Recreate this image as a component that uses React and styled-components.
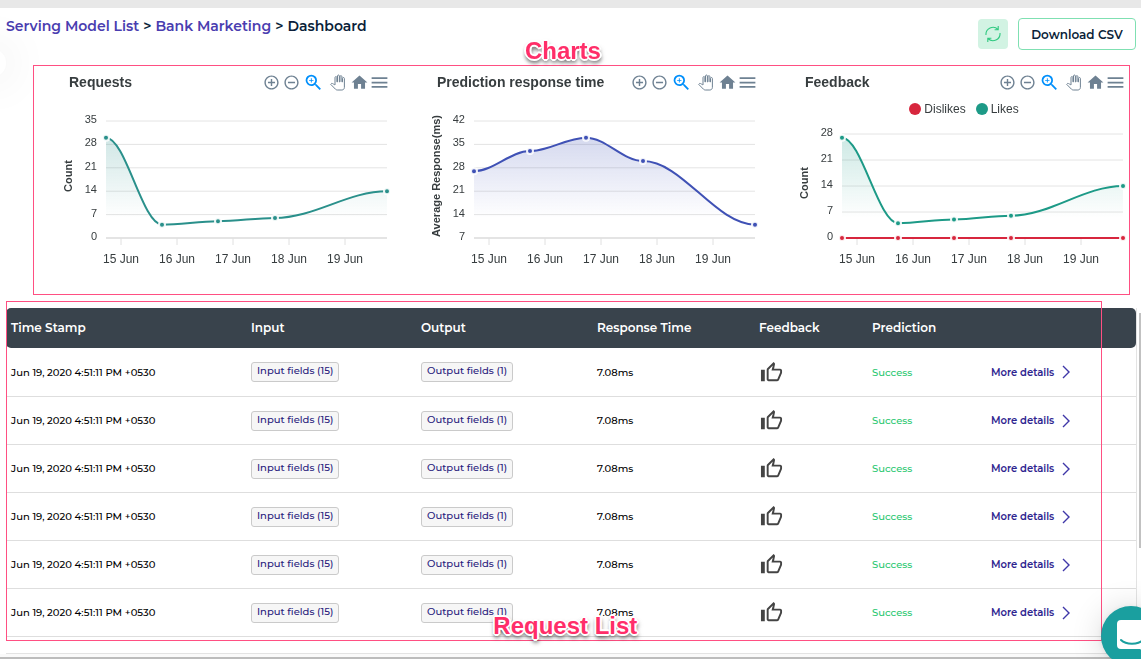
import React from "react";
import styled, { createGlobalStyle } from "styled-components";
import {
  MdAddCircleOutline,
  MdRemoveCircleOutline,
  MdZoomIn,
  MdHome,
  MdMenu,
} from "react-icons/md";

const uiFont = `Montserrat, Inter, "Liberation Sans", sans-serif`;
const chartFont = `"Liberation Sans", Helvetica, Arial, sans-serif`;

const GlobalStyle = createGlobalStyle`
  * { box-sizing: border-box; }
  body {
    margin: 0;
    background: #fff;
    color: #0b2239;
    font-family: ${uiFont};
    overflow: hidden;
  }
  button { font-family: inherit; cursor: pointer; }
`;

const Page = styled.div`
  display: flex;
  flex-direction: column;
`;

const TopStrip = styled.div`
  height: 8px;
  background: #e8e8e8;
`;

const Header = styled.header`
  display: flex;
  justify-content: space-between;
  align-items: flex-start;
  height: 57px;
  padding: 10px 5px 0 6px;
`;

const Breadcrumb = styled.nav`
  display: flex;
  gap: 4px;
  font-size: 14px;
  line-height: 16px;
  font-weight: 600;
  color: #0b1f3a;
  a {
    color: #4a3db0;
    text-decoration: none;
  }
`;

const Actions = styled.div`
  display: flex;
  align-items: center;
  gap: 10px;
`;

const RefreshButton = styled.button`
  display: flex;
  align-items: center;
  justify-content: center;
  width: 30px;
  height: 30px;
  padding: 0;
  border: 0;
  border-radius: 4px;
  background: #d2f3e3;
  color: #2fc980;
`;

const DownloadButton = styled.button`
  height: 32px;
  width: 118px;
  padding: 0;
  border: 1px solid #7fe0b2;
  border-radius: 4px;
  background: #fff;
  color: #0b1f3a;
  font-size: 12px;
  font-weight: 600;
  white-space: nowrap;
`;

const ChartsSection = styled.section`
  position: relative;
  display: grid;
  grid-template-columns: repeat(3, 1fr);
  height: 230px;
  margin: 0 4px 0 33px;
`;

const ChartCard = styled.article`
  display: flex;
  flex-direction: column;
  min-width: 0;
  font-family: ${chartFont};
  color: #373d3f;
`;

const ChartHead = styled.div`
  display: flex;
  align-items: center;
  justify-content: space-between;
  height: 34px;
  padding: 0 13px 0 36px;
`;

const ChartTitle = styled.h2`
  margin: 0;
  font-size: 14px;
  line-height: 16px;
  font-weight: 700;
  white-space: nowrap;
`;

const Toolbar = styled.div`
  display: flex;
  align-items: center;
  gap: 2px;
`;

const ToolButton = styled.button`
  display: flex;
  align-items: center;
  justify-content: center;
  width: ${(p) => (p.$wide ? 22 : 18)}px;
  height: 20px;
  padding: 0;
  border: 0;
  background: none;
  color: ${(p) => (p.$active ? "#008ffb" : "#6e8192")};
  svg { flex: none; overflow: visible; }
`;

const ChartBody = styled.div`
  position: relative;
`;

const Plot = styled.svg`
  display: block;
  width: 100%;
  height: 180px;
  font-family: ${chartFont};
  fill: #373d3f;
`;

const Legend = styled.div`
  position: absolute;
  top: 1px;
  right: 14px;
  left: 36px;
  display: flex;
  justify-content: center;
  gap: 10px;
  font-size: 12px;
  line-height: 18px;
`;

const LegendItem = styled.span`
  display: flex;
  align-items: center;
  gap: 3px;
  &::before {
    content: "";
    width: 12px;
    height: 12px;
    border-radius: 50%;
    background: ${(p) => p.$color};
  }
`;

const Frame = styled.div`
  position: absolute;
  top: ${(p) => p.$top}px;
  right: ${(p) => p.$right}px;
  bottom: ${(p) => p.$bottom}px;
  left: 0;
  border: 1px solid #ff4f82;
  pointer-events: none;
`;

const Callout = styled.div`
  position: absolute;
  left: ${(p) => p.$left};
  ${(p) => (p.$edge === "top" ? "top: -28px;" : "bottom: 13px;")}
  font: 700 24px/28px ${chartFont};
  color: #ff2e69;
  white-space: nowrap;
  transform: translateX(-50%);
  pointer-events: none;
  text-shadow: -2px 0 #fff, 2px 0 #fff, 0 -2px #fff, 0 2px #fff,
    -1px -1px #fff, 1px 1px #fff, -1px 1px #fff, 1px -1px #fff,
    0 3px 4px rgba(0, 0, 0, 0.6), 1px 3px 5px rgba(0, 0, 0, 0.5);
`;

const ListSection = styled.section`
  position: relative;
  margin: 13px 4px 0 6px;
  padding-bottom: 16px;
  border-right: 1px solid #e3e3e3;
  border-bottom: 1px solid #e3e3e3;
`;

const RequestTable = styled.table`
  width: 100%;
  table-layout: fixed;
  border-collapse: separate;
  border-spacing: 0;
`;

const Col = styled.col`
  width: ${(p) => (p.$w ? `${p.$w}px` : "auto")};
`;

const Th = styled.th`
  height: 40px;
  padding: 0 5px 2px;
  background: #39434c;
  color: #fff;
  font-size: 12px;
  font-weight: 600;
  text-align: left;
  &:first-child { border-radius: 5px 0 0 5px; }
  &:last-child { border-radius: 0 5px 5px 0; }
`;

const Td = styled.td`
  height: 48px;
  padding: 0 5px;
  border-bottom: 1px solid #dedede;
  font-size: 10px;
  font-weight: 500;
  color: ${(p) => (p.$success ? "#28c76f" : "#000")};
  white-space: nowrap;
  vertical-align: middle;
  svg { display: block; }
  tr:first-child > & { height: 49px; }
`;

const ThumbIcon = styled.svg`
  margin-left: 1px;
  fill: #444;
`;

const FieldButton = styled.button`
  display: block;
  height: 20px;
  padding: 0 5px 2px;
  border: 1px solid #cacaca;
  border-radius: 3px;
  background: #f6f6f6;
  color: #28207c;
  font-size: 10px;
  line-height: 16px;
  font-weight: 500;
`;

const DetailsLink = styled.a`
  display: flex;
  align-items: center;
  gap: 8px;
  color: #2e2590;
  font-size: 10px;
  font-weight: 600;
  text-decoration: none;
`;

const BottomBar = styled.div`
  height: 5px;
  border-bottom: 2px solid #bcbcbc;
  background: #fafafa;
`;

const ScrollThumb = styled.div`
  position: absolute;
  top: 5px;
  right: -5px;
  width: 2px;
  height: 235px;
  background: #c1c1c1;
`;

const DrawerHandle = styled.button`
  position: fixed;
  top: 49px;
  left: -22px;
  width: 28px;
  height: 28px;
  padding: 0;
  border: 0;
  border-radius: 50%;
  background: #fff;
  box-shadow: 0 0 48px rgba(0, 0, 0, 0.14);
`;

const ChatButton = styled.button`
  position: fixed;
  right: -20px;
  bottom: -7px;
  width: 60px;
  height: 60px;
  padding: 0;
  border: 0;
  border-radius: 50%;
  background: #1a9f9f;
  box-shadow: 0 1px 6px rgba(0, 0, 0, 0.08), 0 2px 32px rgba(0, 0, 0, 0.16);
  svg { display: block; }
`;

const X = [73, 129, 185, 242, 354];
const TICKS = [88, 144, 200, 256, 312];
const DAYS = ["15 Jun", "16 Jun", "17 Jun", "18 Jun", "19 Jun"];
const BASE = 139;

function smoothPath(points) {
  return points.reduce((d, [x, y], i) => {
    if (i === 0) return `M${x} ${y}`;
    const [px, py] = points[i - 1];
    const reach = (x - px) * 0.35;
    return `${d} C${px + reach} ${py} ${x - reach} ${y} ${x} ${y}`;
  }, "");
}

function AreaChart({ id, title, axis, axisY, top, min, max, series, legend }) {
  const toY = (v) => BASE - ((v - min) / (max - min)) * (BASE - top);
  const labels = [];
  for (let v = min; v <= max; v += 7) labels.push(v);
  return (
    <ChartCard>
      <ChartHead>
        <ChartTitle>{title}</ChartTitle>
        <Toolbar>
          <ToolButton aria-label="Zoom in"><MdAddCircleOutline size={17} /></ToolButton>
          <ToolButton aria-label="Zoom out"><MdRemoveCircleOutline size={17} /></ToolButton>
          <ToolButton aria-label="Selection zoom" $active $wide><MdZoomIn size={21} /></ToolButton>
          <ToolButton aria-label="Pan" $wide>
            <svg width="15" height="15" viewBox="0 0 24 24" fill="none" stroke="currentColor" strokeWidth="1.6">
              <path d="M23 5.5V20c0 2.2-1.8 4-4 4h-7.3c-1.08 0-2.1-.43-2.85-1.19L1 14.83s1.26-1.23 1.3-1.25c.22-.19.49-.29.79-.29.22 0 .42.06.6.16.04.01 4.31 2.46 4.31 2.46V4c0-.83.67-1.5 1.5-1.5S11 3.17 11 4v7h1V1.5c0-.83.67-1.5 1.5-1.5S15 .67 15 1.5V11h1V2.5c0-.83.67-1.5 1.5-1.5s1.5.67 1.5 1.5V11h1V5.5c0-.83.67-1.5 1.5-1.5s1.5.67 1.5 1.5z" />
            </svg>
          </ToolButton>
          <ToolButton aria-label="Reset"><MdHome size={19} /></ToolButton>
          <ToolButton aria-label="Menu"><MdMenu size={21} /></ToolButton>
        </Toolbar>
      </ChartHead>
      <ChartBody>
        {legend && (
          <Legend>
            {legend.map((l) => (
              <LegendItem key={l.name} $color={l.color}>{l.name}</LegendItem>
            ))}
          </Legend>
        )}
        <Plot viewBox="0 0 368 180" role="img" aria-label={title}>
          <defs>
            {series.map((s, i) => (
              <linearGradient key={i} id={`${id}-${i}`} x1="0" y1="0" x2="0" y2="1">
                <stop offset="0" stopColor={s.color} stopOpacity="0.22" />
                <stop offset="0.8" stopColor={s.color} stopOpacity="0" />
              </linearGradient>
            ))}
          </defs>
          {labels.map((v) => (
            <g key={v}>
              <line x1="73" x2="354" y1={toY(v)} y2={toY(v)} stroke="#e4e4e4" strokeWidth={v === min ? 2 : 1} />
              <text x="64" y={toY(v) + 2} fontSize="11" textAnchor="end">{v}</text>
            </g>
          ))}
          {TICKS.map((x, i) => (
            <g key={x}>
              <line x1={x} x2={x} y1={BASE} y2={BASE + 7} stroke="#e0e0e0" />
              <text x={x} y="164" fontSize="12" textAnchor="middle">{DAYS[i]}</text>
            </g>
          ))}
          <text transform={`translate(39 ${axisY}) rotate(-90)`} fontSize="11" fontWeight="700" textAnchor="middle">{axis}</text>
          {series.map((s, i) => {
            const pts = s.values.map((v, k) => [X[k], toY(v)]);
            const line = smoothPath(pts);
            return (
              <g key={i}>
                <path d={`${line} L354 ${BASE} L73 ${BASE} Z`} fill={`url(#${id}-${i})`} />
                <path d={line} fill="none" stroke={s.color} strokeWidth="2" />
                {pts.map(([x, y]) => (
                  <circle key={x} cx={x} cy={y} r="3" fill={s.color} stroke="#fff" strokeWidth="2" strokeOpacity="0.9" />
                ))}
              </g>
            );
          })}
        </Plot>
      </ChartBody>
    </ChartCard>
  );
}

const COLUMNS = [
  { name: "Time Stamp", w: 240 },
  { name: "Input", w: 170 },
  { name: "Output", w: 176 },
  { name: "Response Time", w: 162 },
  { name: "Feedback", w: 113 },
  { name: "Prediction", w: 119 },
  { name: "" },
];

const ROWS = Array.from({ length: 6 }, (_, id) => ({
  id,
  time: "Jun 19, 2020 4:51:11 PM +0530",
  input: "Input fields (15)",
  output: "Output fields (1)",
  response: "7.08ms",
  prediction: "Success",
}));

function RequestRow({ row }) {
  return (
    <tr>
      <Td>{row.time}</Td>
      <Td><FieldButton>{row.input}</FieldButton></Td>
      <Td><FieldButton>{row.output}</FieldButton></Td>
      <Td>{row.response}</Td>
      <Td>
        <ThumbIcon width="23" height="23" viewBox="0 0 24 24" role="img" aria-label="Liked">
          <path d="M9 21h9c.83 0 1.54-.5 1.84-1.22l3.02-7.05c.09-.23.14-.47.14-.73v-2c0-1.1-.9-2-2-2h-6.31l.95-4.57.03-.32c0-.41-.17-.79-.44-1.06L14.17 1 7.58 7.59C7.22 7.95 7 8.45 7 9v10c0 1.1.9 2 2 2zM9 9l4.34-4.34L12 10h9v2l-3 7H9V9zM1 9h4v12H1z" />
        </ThumbIcon>
      </Td>
      <Td $success>{row.prediction}</Td>
      <Td>
        <DetailsLink href="#details">
          More details
          <svg width="8" height="14" viewBox="0 0 8 14" fill="none" stroke="#3f37a8" strokeWidth="1.4">
            <path d="M1 1l6 6-6 6" />
          </svg>
        </DetailsLink>
      </Td>
    </tr>
  );
}

export default function App() {
  return (
    <Page>
      <GlobalStyle />
      <TopStrip />
      <DrawerHandle aria-label="Open menu" />
      <Header>
        <Breadcrumb aria-label="Breadcrumb">
          <a href="#models">Serving Model List</a>
          <span>&gt;</span>
          <a href="#bank">Bank Marketing</a>
          <span>&gt;</span>
          <span>Dashboard</span>
        </Breadcrumb>
        <Actions>
          <RefreshButton aria-label="Refresh">
            <svg width="16" height="18" viewBox="0 0 16 18" fill="none" stroke="currentColor" strokeWidth="1.1">
              <path d="M1 10A7 7 0 0 1 13 4.5M13.2 1v3.8H9.6M15 8A7 7 0 0 1 3 13.5M2.8 17v-3.8h3.6" />
            </svg>
          </RefreshButton>
          <DownloadButton>Download CSV</DownloadButton>
        </Actions>
      </Header>

      <ChartsSection>
        <AreaChart
          id="requests" title="Requests" axis="Count" axisY={77} top={22} min={0} max={35}
          series={[{ color: "#2a908b", values: [30, 4, 5, 6, 14] }]}
        />
        <AreaChart
          id="response" title="Prediction response time" axis="Average Response(ms)" axisY={77} top={22} min={7} max={42}
          series={[{ color: "#3f51b5", values: [27, 33, 37, 30, 11] }]}
        />
        <AreaChart
          id="feedback" title="Feedback" axis="Count" axisY={84} top={35} min={0} max={28}
          series={[
            { color: "#1d9a87", values: [27, 4, 5, 6, 14] },
            { color: "#d7263d", values: [0, 0, 0, 0, 0] },
          ]}
          legend={[
            { name: "Dislikes", color: "#d7263d" },
            { name: "Likes", color: "#1d9a87" },
          ]}
        />
        <Frame $top={0} $right={7} $bottom={0} />
        <Callout $edge="top" $left="48%">Charts</Callout>
      </ChartsSection>

      <ListSection>
        <RequestTable>
          <colgroup>
            {COLUMNS.map((c) => <Col key={c.name} $w={c.w} />)}
          </colgroup>
          <thead>
            <tr>{COLUMNS.map((c) => <Th key={c.name}>{c.name}</Th>)}</tr>
          </thead>
          <tbody>
            {ROWS.map((row) => <RequestRow key={row.id} row={row} />)}
          </tbody>
        </RequestTable>
        <ScrollThumb />
        <Frame $top={-7} $right={34} $bottom={12} />
        <Callout $edge="bottom" $left="49.5%">Request List</Callout>
      </ListSection>
      <BottomBar />

      <ChatButton aria-label="Open chat">
        <svg width="60" height="60" viewBox="0 0 60 60">
          <path d="M20 14h22a4 4 0 0 1 4 4v30l-7-5H20a4 4 0 0 1-4-4V18a4 4 0 0 1 4-4z" fill="#fff" />
          <path d="M20 34c5 5 17 5 22 0" fill="none" stroke="#1a9f9f" strokeWidth="2" strokeLinecap="round" />
        </svg>
      </ChatButton>
    </Page>
  );
}
